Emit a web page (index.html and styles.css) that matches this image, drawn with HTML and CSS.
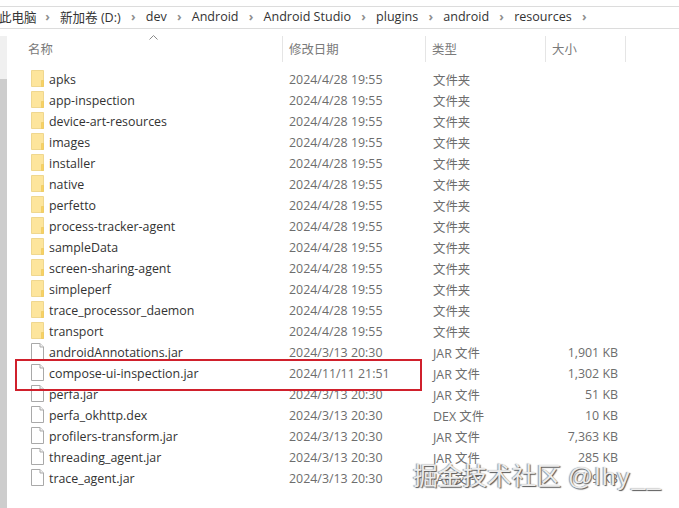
FILE: index.html
```html
<!DOCTYPE html>
<html lang="zh">
<head>
<meta charset="utf-8">
<title>resources</title>
<link rel="stylesheet" href="styles.css">
</head>
<body>
<svg class="defs" width="0" height="0" aria-hidden="true">
  <symbol id="folder" viewBox="0 0 13 17">
    <path d="M.5 .5h12v16H.5Z" fill="#fde59c" stroke="#efd78f"/>
    <path d="M10.500 10.500h2v6h-2Z" fill="#f9d262" stroke="#ecc860" stroke-width=".7"/>
  </symbol>
  <symbol id="file" viewBox="0 0 13 17">
    <path d="M.5 .5h8.500l3.500 3.500v12.500H.5Z" fill="#fff" stroke="#a9a9a9"/>
    <path d="M9 .5v3.500h3.500" fill="#f2f2f2" stroke="#a9a9a9"/>
  </symbol>
</svg>
<nav class="crumbs">
  <span class="crumb clip">此电脑</span><span class="chev">›</span>
  <span class="crumb">新加卷 (D:)</span><span class="chev">›</span>
  <span class="crumb">dev</span><span class="chev">›</span>
  <span class="crumb">Android</span><span class="chev">›</span>
  <span class="crumb">Android Studio</span><span class="chev">›</span>
  <span class="crumb">plugins</span><span class="chev">›</span>
  <span class="crumb">android</span><span class="chev">›</span>
  <span class="crumb">resources</span><span class="chev">›</span>
</nav>
<main class="pane">
  <div class="rail"><div class="thumb"></div></div>
  <div class="list">
    <div class="head">
      <div class="hcell hname">名称<svg class="sort" width="9" height="5" viewBox="0 0 9 5"><path d="M.5 4.500l4-4 4 4" fill="none" stroke="#8a8a8a"/></svg></div>
      <div class="hcell">修改日期</div>
      <div class="hcell">类型</div>
      <div class="hcell">大小</div>
    </div>
    <div class="rows">
      <div class="row"><span class="name"><svg class="ic"><use href="#folder"/></svg>apks</span><span>2024/4/28 19:55</span><span>文件夹</span><span class="size"></span></div>
      <div class="row"><span class="name"><svg class="ic"><use href="#folder"/></svg>app-inspection</span><span>2024/4/28 19:55</span><span>文件夹</span><span class="size"></span></div>
      <div class="row"><span class="name"><svg class="ic"><use href="#folder"/></svg>device-art-resources</span><span>2024/4/28 19:55</span><span>文件夹</span><span class="size"></span></div>
      <div class="row"><span class="name"><svg class="ic"><use href="#folder"/></svg>images</span><span>2024/4/28 19:55</span><span>文件夹</span><span class="size"></span></div>
      <div class="row"><span class="name"><svg class="ic"><use href="#folder"/></svg>installer</span><span>2024/4/28 19:55</span><span>文件夹</span><span class="size"></span></div>
      <div class="row"><span class="name"><svg class="ic"><use href="#folder"/></svg>native</span><span>2024/4/28 19:55</span><span>文件夹</span><span class="size"></span></div>
      <div class="row"><span class="name"><svg class="ic"><use href="#folder"/></svg>perfetto</span><span>2024/4/28 19:55</span><span>文件夹</span><span class="size"></span></div>
      <div class="row"><span class="name"><svg class="ic"><use href="#folder"/></svg>process-tracker-agent</span><span>2024/4/28 19:55</span><span>文件夹</span><span class="size"></span></div>
      <div class="row"><span class="name"><svg class="ic"><use href="#folder"/></svg>sampleData</span><span>2024/4/28 19:55</span><span>文件夹</span><span class="size"></span></div>
      <div class="row"><span class="name"><svg class="ic"><use href="#folder"/></svg>screen-sharing-agent</span><span>2024/4/28 19:55</span><span>文件夹</span><span class="size"></span></div>
      <div class="row"><span class="name"><svg class="ic"><use href="#folder"/></svg>simpleperf</span><span>2024/4/28 19:55</span><span>文件夹</span><span class="size"></span></div>
      <div class="row"><span class="name"><svg class="ic"><use href="#folder"/></svg>trace_processor_daemon</span><span>2024/4/28 19:55</span><span>文件夹</span><span class="size"></span></div>
      <div class="row"><span class="name"><svg class="ic"><use href="#folder"/></svg>transport</span><span>2024/4/28 19:55</span><span>文件夹</span><span class="size"></span></div>
      <div class="row"><span class="name"><svg class="ic"><use href="#file"/></svg>androidAnnotations.jar</span><span>2024/3/13 20:30</span><span>JAR 文件</span><span class="size">1,901 KB</span></div>
      <div class="row"><span class="name"><svg class="ic"><use href="#file"/></svg>compose-ui-inspection.jar</span><span>2024/11/11 21:51</span><span>JAR 文件</span><span class="size">1,302 KB</span></div>
      <div class="row"><span class="name"><svg class="ic"><use href="#file"/></svg>perfa.jar</span><span>2024/3/13 20:30</span><span>JAR 文件</span><span class="size">51 KB</span></div>
      <div class="row"><span class="name"><svg class="ic"><use href="#file"/></svg>perfa_okhttp.dex</span><span>2024/3/13 20:30</span><span>DEX 文件</span><span class="size">10 KB</span></div>
      <div class="row"><span class="name"><svg class="ic"><use href="#file"/></svg>profilers-transform.jar</span><span>2024/3/13 20:30</span><span>JAR 文件</span><span class="size">7,363 KB</span></div>
      <div class="row"><span class="name"><svg class="ic"><use href="#file"/></svg>threading_agent.jar</span><span>2024/3/13 20:30</span><span>JAR 文件</span><span class="size">285 KB</span></div>
      <div class="row"><span class="name"><svg class="ic"><use href="#file"/></svg>trace_agent.jar</span><span>2024/3/13 20:30</span><span>JAR 文件</span><span class="size">9 KB</span></div>
    </div>
  </div>
</main>
<div class="highlight"></div>
<div class="watermark">掘金技术社区 <span class="handle">@lhy__</span></div>
</body>
</html>
```

FILE: styles.css
```css
* { box-sizing: border-box; }
html, body { margin: 0; padding: 0; }
body {
  width: 679px;
  height: 508px;
  overflow: hidden;
  position: relative;
  background: #fff;
  font-family: "Open Sans", "Noto Sans CJK SC", sans-serif;
  font-size: 12.4px;
  color: #6d6d6d;
}
.defs { position: absolute; }
.crumbs {
  margin-top: 6px;
  height: 23px;
  border-top: 1px solid #dcdcdc;
  border-bottom: 1px solid #dcdcdc;
  display: flex;
  align-items: center;
  color: #333;
  font-size: 12.550px;
  white-space: nowrap;
  gap: 7px;
  padding-bottom: 2px;
}
.crumb { flex: none; }
.clip { margin-left: -1px; width: 36px; }
.chev { width: 11px; text-align: center; color: #8f8f8f; font-weight: 700; flex: none; }
.pane { display: flex; height: 479px; }
.rail {
  width: 7px;
  margin-top: 7px;
  background: #f0f0f0;
  flex: none;
  padding-top: 43px;
}
.thumb { height: 100%; background: #cdcdcd; }
.list { flex: 1; }
.head {
  height: 26px;
  margin-top: 7px;
  display: grid;
  grid-template-columns: 276px 143px 120px 80px;
}
.hcell {
  padding-left: 6px;
  border-right: 1px solid #e5e5e5;
  color: #7a7a7a;
  display: flex;
  align-items: center;
  position: relative;
}
.hname { padding-left: 21px; }
.sort { position: absolute; left: 142px; top: -1px; }
.rows { margin-top: 6px; }
.row {
  height: 21px;
  display: grid;
  grid-template-columns: 282px 144px 120px 65px;
  align-items: center;
  white-space: nowrap;
  padding-top: 2px;
}
.name { display: flex; align-items: center; padding-left: 24px; color: #333; }
.ic { width: 13px; height: 17px; margin-right: 5px; flex: none; position: relative; top: -1px; }
.size { text-align: right; }
.highlight {
  position: absolute;
  left: 15px;
  top: 359px;
  width: 407px;
  height: 32px;
  border: 2px solid #d0202c;
}
.watermark {
  position: absolute;
  left: 413px;
  top: 460px;
  font-family: "Liberation Sans", "Noto Sans CJK SC", sans-serif;
  font-size: 24.700px;
  line-height: 34px;
  white-space: nowrap;
  color: #ececec;
  text-shadow: 1px 1px 1px #555, -1px 0 1px #999;
}
.handle { letter-spacing: 1.700px; }
```
